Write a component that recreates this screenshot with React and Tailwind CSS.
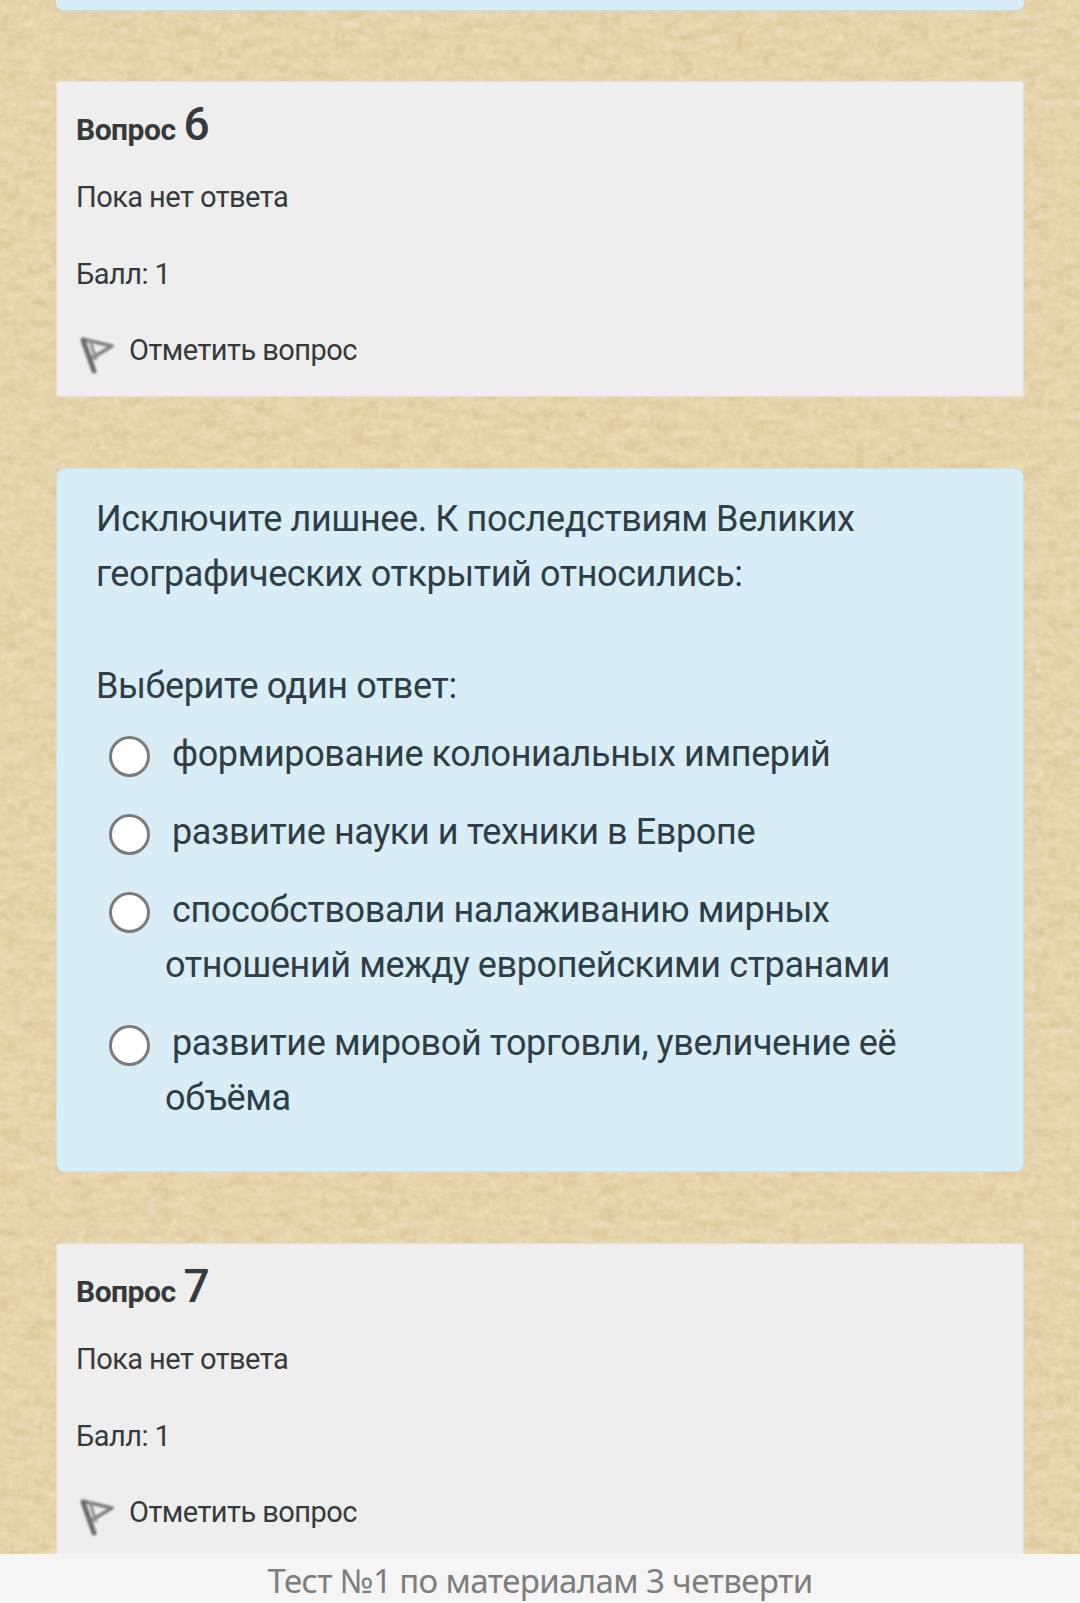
const options = [
  { id: 1, lines: ["формирование колониальных империй"] },
  { id: 2, lines: ["развитие науки и техники в Европе"] },
  { id: 3, lines: ["способствовали налаживанию мирных", "отношений между европейскими странами"] },
  { id: 4, lines: ["развитие мировой торговли, увеличение её", "объёма"] },
];

const FlagIcon = () => (
  <svg width="36" height="40" viewBox="0 0 36 40" className="shrink-0 blur-[0.8px]">
    <path d="M3 5 L33 12 L13 24" fill="none" stroke="#7d7d7d" strokeWidth="3.5" strokeLinejoin="round" />
    <path d="M4 6 L15 37" fill="none" stroke="#6a6a6a" strokeWidth="5" strokeLinecap="round" />
    <path d="M11 6 L17 26" fill="none" stroke="#8f8f8f" strokeWidth="3" />
  </svg>
);

const InfoCard = ({ num }) => (
  <div className="bg-[#eeeeee] rounded-[3px] h-[316px] px-[19px] pt-[12px] text-[#373a3c] shrink-0 border border-[#e6e0d6]">
    <h3 className="h-[60px] flex items-baseline gap-[8px] font-bold text-[30px] leading-[60px] tracking-[-0.5px]">
      Вопрос <span className="text-[46px] font-medium tracking-normal">{num}</span>
    </h3>
    <div className="mt-[23px] h-[77px] text-[29px] leading-[40px] tracking-[-0.55px]">Пока нет ответа</div>
    <div className="h-[76px] text-[29px] leading-[40px] tracking-[-0.55px]">Балл: 1</div>
    <div className="flex items-start gap-[14px] text-[29px] leading-[40px] tracking-[-0.55px]">
      <span className="mt-[4px] ml-[3px]"><FlagIcon /></span>
      <span>Отметить вопрос</span>
    </div>
  </div>
);

const Option = ({ lines }) => (
  <div className="relative pl-[69px] pb-[23px]">
    <span className="absolute left-[13px] top-[9px] w-[41px] h-[41px] rounded-full bg-white border-[3px] border-[#7b7b7b]" />
    <div className="pl-[7px] leading-[55px]">{lines[0]}</div>
    {lines[1] && <div className="leading-[55px]">{lines[1]}</div>}
  </div>
);

export default function App() {
  return (
    <div
      className="relative h-[1603px] w-[1080px] flex flex-col overflow-hidden bg-[#e7d5ac]"
      style={{ fontFamily: 'Roboto, "Noto Sans", sans-serif' }}
    >
      {/* paper texture */}
      <svg className="absolute inset-0 w-full h-full" aria-hidden="true">
        <filter id="paper">
          <feTurbulence type="fractalNoise" baseFrequency="0.04 0.1" numOctaves="4" seed="7" />
          <feColorMatrix values="0 0 0 0 0.66  0 0 0 0 0.5  0 0 0 0 0.24  1.6 0 0 0 -0.45" />
        </filter>
        <filter id="grain">
          <feTurbulence type="fractalNoise" baseFrequency="0.14" numOctaves="2" seed="3" />
          <feColorMatrix values="0 0 0 0 0.95  0 0 0 0 0.88  0 0 0 0 0.74  1.8 0 0 0 -0.6" />
        </filter>
        <rect width="100%" height="100%" filter="url(#paper)" opacity="0.6" />
        <rect width="100%" height="100%" filter="url(#grain)" opacity="0.35" />
      </svg>

      <main className="relative flex-1 overflow-hidden px-[56px] flex flex-col">
        <div className="h-[11px] shrink-0 bg-[#d9edf7] rounded-b-[8px] border-b border-[#bcdde8]" />
        <div className="mt-[70px]">
          <InfoCard num="6" />
        </div>
        <div className="mt-[71px] h-[704px] shrink-0 bg-[#d9edf7] rounded-[8px] border border-[#c4e3ec] px-[39px] pt-[23px] text-[#2f3e46] text-[36px] tracking-[-0.4px]">
          <p className="leading-[55px]">Исключите лишнее. К последствиям Великих географических открытий относились:</p>
          <p className="mt-[57px] leading-[55px] mb-[13px]">Выберите один ответ:</p>
          {options.map((o) => (
            <Option key={o.id} lines={o.lines} />
          ))}
        </div>
        <div className="mt-[71px]">
          <InfoCard num="7" />
        </div>
      </main>

      <footer
        className="relative h-[49px] shrink-0 bg-[#f5f5f5] text-center text-[33px] leading-[54px] text-[#7d7d7d] tracking-[-0.6px]"
        style={{ fontFamily: '"Noto Sans", sans-serif' }}
      >
        Тест №1 по материалам 3 четверти
      </footer>
    </div>
  );
}
